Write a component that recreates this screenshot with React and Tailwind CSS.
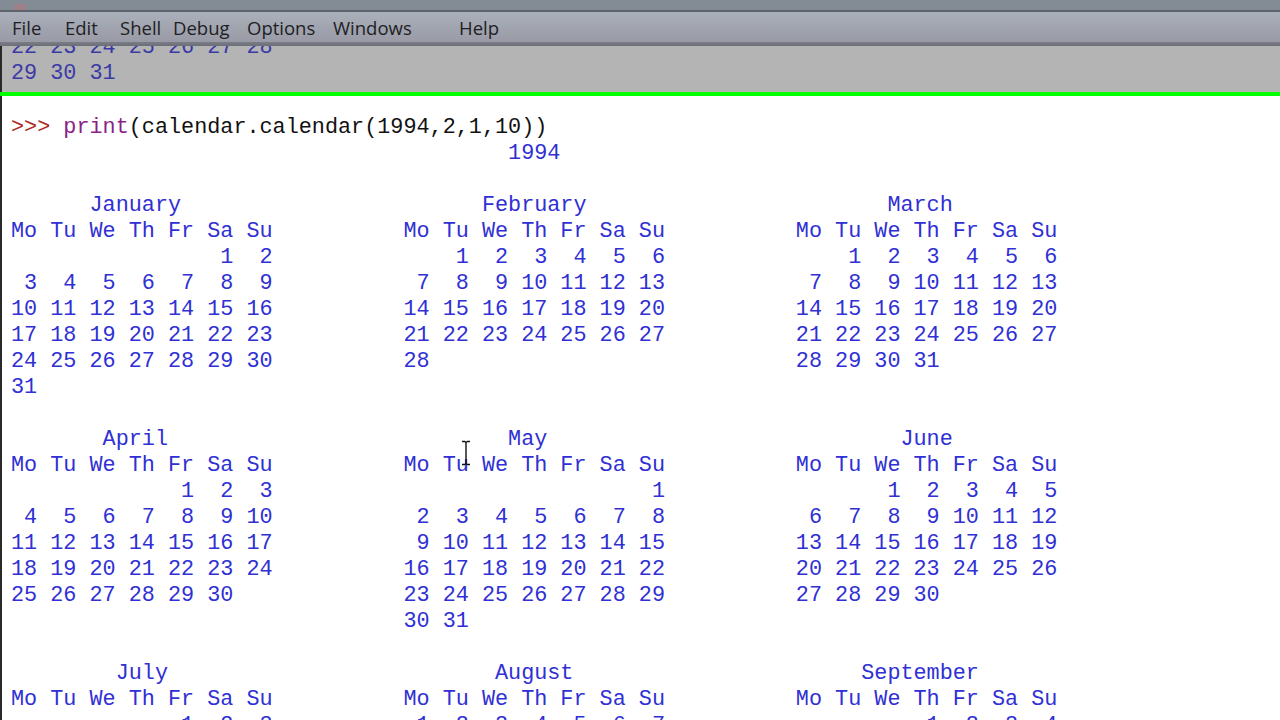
import React from "react";

function center(s, width) {
  const marg = width - s.length;
  if (marg <= 0) return s;
  const left = Math.floor(marg / 2) + (marg & width & 1);
  return " ".repeat(left) + s + " ".repeat(marg - left);
}

const MONTHS = ["January","February","March","April","May","June","July","August","September","October","November","December"];

function monthWeeks(year, month) {
  const first = new Date(year, month - 1, 1).getDay();
  const offset = (first + 6) % 7;
  const nd = new Date(year, month, 0).getDate();
  const cells = [];
  for (let i = 0; i < offset; i++) cells.push(0);
  for (let d = 1; d <= nd; d++) cells.push(d);
  while (cells.length % 7) cells.push(0);
  const weeks = [];
  for (let i = 0; i < cells.length; i += 7) weeks.push(cells.slice(i, i + 7));
  return weeks;
}

function fmtWeek(w) {
  return w.map((d) => (d === 0 ? "  " : String(d).padStart(2, " "))).join(" ");
}

function buildCalendar(year) {
  const colw = 20, c = 10, m = 3;
  const out = [];
  out.push(center(String(year), colw * m + c * (m - 1)).replace(/\s+$/, ""));
  const sp = " ".repeat(c);
  const header = "Mo Tu We Th Fr Sa Su";
  for (let r = 0; r < 4; r++) {
    out.push("");
    const months = [r * 3 + 1, r * 3 + 2, r * 3 + 3];
    out.push(months.map((k) => center(MONTHS[k - 1], colw)).join(sp).replace(/\s+$/, ""));
    out.push(months.map(() => header).join(sp));
    const cals = months.map((k) => monthWeeks(year, k));
    const h = Math.max(...cals.map((x) => x.length));
    for (let j = 0; j < h; j++) {
      out.push(
        cals.map((cal) => (j < cal.length ? fmtWeek(cal[j]) : center("", colw))).join(sp).replace(/\s+$/, "")
      );
    }
  }
  return out;
}

const calLines = buildCalendar(1994);

const mono = { fontFamily: '"Liberation Mono", "Courier New", monospace' };

export default function App() {
  const menus = [
    ["File", 53],
    ["Edit", 55],
    ["Shell", 53],
    ["Debug", 74],
    ["Options", 86],
    ["Windows", 126],
    ["Help", 60],
  ];
  return (
    <div className="w-[1280px] h-[720px] overflow-hidden flex flex-col bg-white relative">
      {/* title strip */}
      <div className="h-[10px] bg-[#838b95] flex items-end pl-[14px] overflow-hidden">
        <div className="w-[12px] h-[6px] bg-[#b07a80] opacity-60" />
      </div>
      <div className="h-[2px] bg-[#5d626b]" />
      {/* menu bar */}
      <div
        className="h-[30px] bg-gradient-to-b from-[#aab0bb] to-[#999aa5] flex items-center pl-[12px] pt-[2px] text-[#1e1e24] text-[18.5px]"
        style={{ fontFamily: '"Open Sans", "Noto Sans", sans-serif' }}
      >
        {menus.map(([t, w]) => (
          <span key={t} className="block leading-none" style={{ width: w }}>
            {t}
          </span>
        ))}
      </div>
      <div className="h-[4px] bg-gradient-to-b from-[#7b7e87] to-[#6b6e77]" />
      {/* squeezed previous output */}
      <div className="h-[46px] bg-[#b4b4b4] overflow-hidden border-l-2 border-[#2a2a2a] pl-[9px]">
        <div className="mt-[-11px] text-[21.8px] leading-[26px] text-[#3a3aa6] whitespace-pre" style={mono}>
          <div>22 23 24 25 26 27 28</div>
          <div>29 30 31</div>
        </div>
      </div>
      <div className="h-[4px] bg-[#00ff00]" />
      {/* shell content */}
      <div className="flex-1 overflow-hidden border-l-2 border-[#2a2a2a] pl-[9px] pt-[19px]">
        <div className="text-[21.8px] leading-[26px] whitespace-pre" style={mono}>
          <div>
            <span className="text-[#b02828]">&gt;&gt;&gt; </span>
            <span className="text-[#8a1f8a]">print</span>
            <span className="text-[#111]">(calendar.calendar(1994,2,1,10))</span>
          </div>
          {calLines.map((l, i) => (
            <div key={i} className="text-[#3030d4] h-[26px]">
              {l}
            </div>
          ))}
        </div>
      </div>
      {/* I-beam cursor */}
      <svg className="absolute left-[460px] top-[440px]" width="12" height="26" viewBox="0 0 12 26">
        <path d="M2 1.5h3M7 1.5h3M6 2v22M2 24.5h3M7 24.5h3M5 1.5l1 1 1-1M5 24.5l1-1 1 1" stroke="#111" strokeWidth="1.4" fill="none" />
      </svg>
    </div>
  );
}
